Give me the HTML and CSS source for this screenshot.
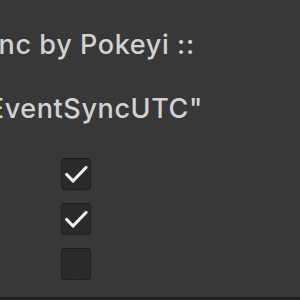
FILE: index.html
```html
<!DOCTYPE html>
<html>
<head>
<meta charset="utf-8">
<link rel="stylesheet" href="styles.css">
</head>
<body>
<div class="panel">
  <div class="title">Event Sync by Pokeyi ::</div>
  <div class="namespace">Namespace: "EventSyncUTC"</div>
  <div class="toggles">
    <div class="check on"><svg viewBox="0 0 30 32" width="30" height="32"><path d="M5.7 16.5 L12 23 L25 9.5" fill="none" stroke="#f0f0f0" stroke-width="3.2" stroke-linecap="round" stroke-linejoin="round"/></svg></div>
    <div class="check on"><svg viewBox="0 0 30 32" width="30" height="32"><path d="M5.7 16.5 L12 23 L25 9.5" fill="none" stroke="#f0f0f0" stroke-width="3.2" stroke-linecap="round" stroke-linejoin="round"/></svg></div>
    <div class="check"></div>
  </div>
</div>
<div class="footer"></div>
</body>
</html>
```
FILE: styles.css
```css
html, body {
  margin: 0;
  padding: 0;
  background: #383838;
  width: 300px;
  height: 300px;
  overflow: hidden;
}
.panel {
  height: 297px;
  overflow: hidden;
  font-family: Inter, "Noto Sans", sans-serif;
  font-size: 27px;
  font-weight: 500;
  letter-spacing: 0.6px;
  color: #d2d2d2;
  white-space: nowrap;
  padding-top: 29px;
  box-sizing: border-box;
}
.title {
  line-height: 32px;
  margin-left: -119px;
}
.namespace {
  line-height: 32px;
  margin-top: 32px;
  margin-left: -202px;
}
.toggles {
  display: flex;
  flex-direction: column;
  gap: 13px;
  margin-top: 33px;
  margin-left: 61px;
}
.check {
  width: 30px;
  height: 32px;
  box-sizing: border-box;
  border-radius: 4px;
  background: #2a2a2a;
  border: 1px solid #212121;
  border-top-color: #1a1a1a;
}
.check svg {
  display: block;
  margin: -1px;
}
.footer {
  height: 3px;
  background: #232323;
}
```
